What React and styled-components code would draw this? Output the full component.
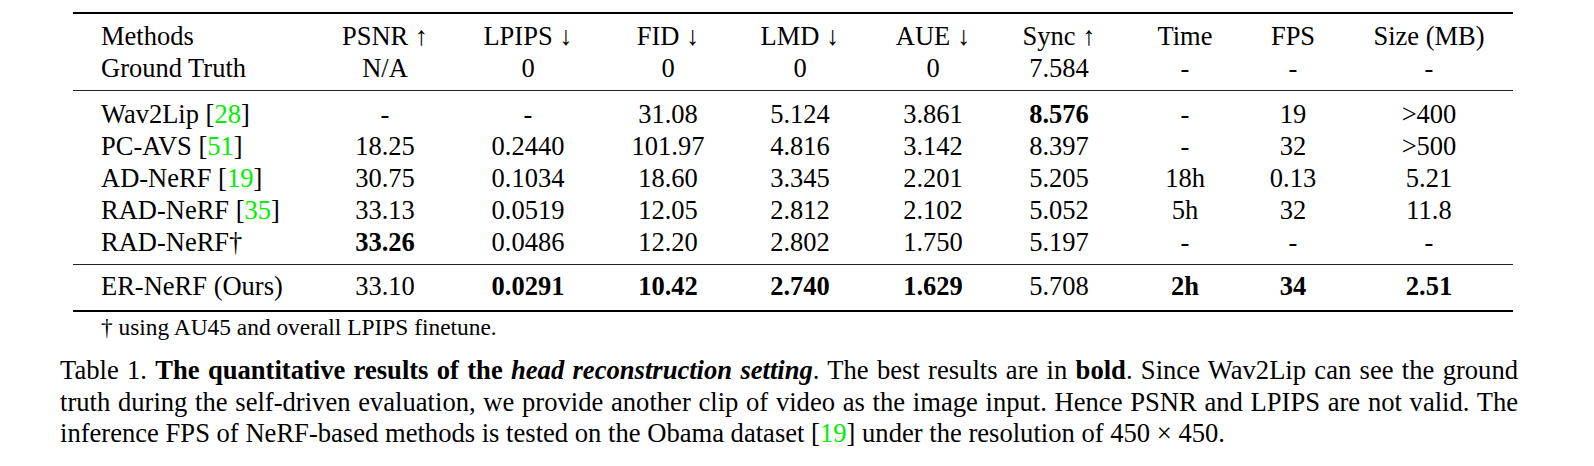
import React from "react";
import styled, { createGlobalStyle } from "styled-components";

const COLS = "254px 116px 170px 110px 154px 112px 140px 112px 104px 168px";

const header = [
  ["Methods", "PSNR ↑", "LPIPS ↓", "FID ↓", "LMD ↓", "AUE ↓", "Sync ↑", "Time", "FPS", "Size (MB)"],
  ["Ground Truth", "N/A", "0", "0", "0", "0", "7.584", "-", "-", "-"],
];

// a leading "*" marks a best (bold) value
const baselines = [
  [["Wav2Lip", "28"], "-", "-", "31.08", "5.124", "3.861", "*8.576", "-", "19", ">400"],
  [["PC-AVS", "51"], "18.25", "0.2440", "101.97", "4.816", "3.142", "8.397", "-", "32", ">500"],
  [["AD-NeRF", "19"], "30.75", "0.1034", "18.60", "3.345", "2.201", "5.205", "18h", "0.13", "5.21"],
  [["RAD-NeRF", "35"], "33.13", "0.0519", "12.05", "2.812", "2.102", "5.052", "5h", "32", "11.8"],
  [["RAD-NeRF†"], "*33.26", "0.0486", "12.20", "2.802", "1.750", "5.197", "-", "-", "-"],
];

const ours = [
  [["ER-NeRF (Ours)"], "33.10", "*0.0291", "*10.42", "*2.740", "*1.629", "5.708", "*2h", "*34", "*2.51"],
];

function MethodName({ name }) {
  const [label, ref] = name;
  return (
    <>
      {label}
      {ref && (
        <>
          {" "}[<Cite>{ref}</Cite>]
        </>
      )}
    </>
  );
}

function DataRow({ cells }) {
  const [name, ...values] = cells;
  return (
    <Row>
      <MethodCell>
        <MethodName name={name} />
      </MethodCell>
      {values.map((v, i) => {
        const best = v.startsWith("*");
        return (
          <Cell key={i} $bold={best}>
            {best ? v.slice(1) : v}
          </Cell>
        );
      })}
    </Row>
  );
}

function App() {
  return (
    <Page>
      <GlobalStyle />
      <Table>
        <Rule $heavy />
        <Block $top={6} $bottom={6}>
          {header.map((r, i) => (
            <Row key={i}>
              <MethodCell>{r[0]}</MethodCell>
              {r.slice(1).map((c, j) => (
                <Cell key={j}>{c}</Cell>
              ))}
            </Row>
          ))}
        </Block>
        <Rule />
        <Block $top={7} $bottom={6}>
          {baselines.map((r, i) => (
            <DataRow key={i} cells={r} />
          ))}
        </Block>
        <Rule />
        <Block $top={5} $bottom={8}>
          {ours.map((r, i) => (
            <DataRow key={i} cells={r} />
          ))}
        </Block>
        <Rule $heavy />
        <Footnote>† using AU45 and overall LPIPS finetune.</Footnote>
      </Table>

      <Caption>
        <CapLine $justify>
          Table 1. <b>The quantitative results of the <i>head reconstruction setting</i></b>. The best
          results are in <b>bold</b>. Since Wav2Lip can see the ground
        </CapLine>
        <CapLine $justify>
          truth during the self-driven evaluation, we provide another clip of video as the image
          input. Hence PSNR and LPIPS are not valid. The
        </CapLine>
        <CapLine>
          inference FPS of NeRF-based methods is tested on the Obama dataset [<Cite>19</Cite>] under
          the resolution of 450 × 450.
        </CapLine>
      </Caption>
    </Page>
  );
}

export default App;

const GlobalStyle = createGlobalStyle`
  body {
    margin: 0;
    background: #ffffff;
    color: #000000;
    font-family: "Liberation Serif", "Times New Roman", "DejaVu Serif", serif;
  }
`;

const Page = styled.div`
  width: 1594px;
  padding-top: 12px;
`;

const Table = styled.div`
  margin-left: 73px;
  width: 1440px;
`;

const Rule = styled.div`
  height: ${(p) => (p.$heavy ? "2px" : "1px")};
  background: ${(p) => (p.$heavy ? "#000" : "#222")};
`;

const Block = styled.div`
  padding: ${(p) => p.$top}px 0 ${(p) => p.$bottom}px;
`;

const Row = styled.div`
  display: grid;
  grid-template-columns: ${COLS};
  align-items: center;
  height: 32px;
  font-size: 26.5px;
  line-height: 32px;
  white-space: nowrap;
`;

const Cell = styled.div`
  text-align: center;
  font-weight: ${(p) => (p.$bold ? 700 : 400)};
`;

const MethodCell = styled.div`
  text-align: left;
  padding-left: 28px;
`;

const Cite = styled.span`
  color: #00ee00;
`;

const Footnote = styled.div`
  margin-top: 2px;
  padding-left: 28px;
  font-family: "Liberation Serif", "Times New Roman", serif;
  font-size: 23.4px;
  line-height: 26px;
`;

const Caption = styled.div`
  margin: 15px 0 0 60px;
  width: 1458px;
  font-size: 26.6px;
  line-height: 31.5px;
`;

const CapLine = styled.div`
  text-align: ${(p) => (p.$justify ? "justify" : "left")};
  text-align-last: ${(p) => (p.$justify ? "justify" : "left")};
`;
